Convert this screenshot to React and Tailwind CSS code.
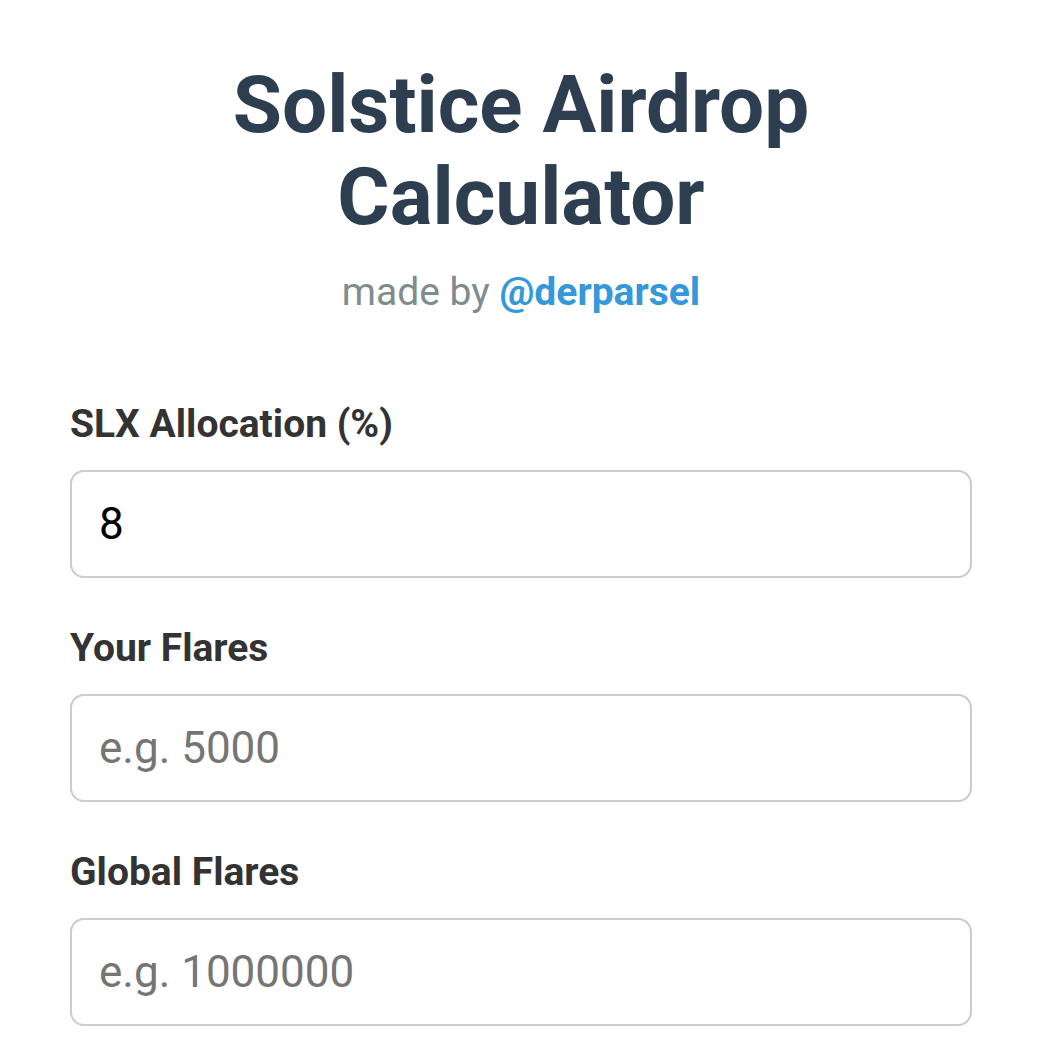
import { useState } from 'react'

function Field({ label, value, placeholder, onChange }) {
  return (
    <div className="mb-[47px]">
      <label className="block text-[39px] leading-[46px] font-bold text-[#333] mb-[23px]">{label}</label>
      <input
        type="number"
        value={value}
        placeholder={placeholder}
        onChange={(e) => onChange(e.target.value)}
        className="block w-full h-[108px] px-[27px] text-[44px] text-black placeholder:text-[#757575] border-2 border-[#ccc] rounded-[14px] outline-none bg-white"
      />
    </div>
  )
}

export default function App() {
  const [alloc, setAlloc] = useState('8')
  const [mine, setMine] = useState('')
  const [global, setGlobal] = useState('')

  return (
    <div className="min-h-screen bg-white" style={{ fontFamily: 'Roboto, "Noto Sans", sans-serif' }}>
      <div className="w-[902px] ml-[70px] pt-[59px]">
        {/* Header */}
        <h1 className="text-center text-[80px] leading-[92px] font-bold text-[#2c3e50]">
          Solstice Airdrop
          <br />
          Calculator
        </h1>
        <p className="text-center text-[39px] leading-[46px] text-[#7f8c8d] mt-[26px] mb-[86px]">
          made by <a href="#" className="font-bold text-[#3498db]">@derparsel</a>
        </p>

        <Field label="SLX Allocation (%)" value={alloc} onChange={setAlloc} />
        <Field label="Your Flares" value={mine} placeholder="e.g. 5000" onChange={setMine} />
        <Field label="Global Flares" value={global} placeholder="e.g. 1000000" onChange={setGlobal} />
      </div>
    </div>
  )
}
